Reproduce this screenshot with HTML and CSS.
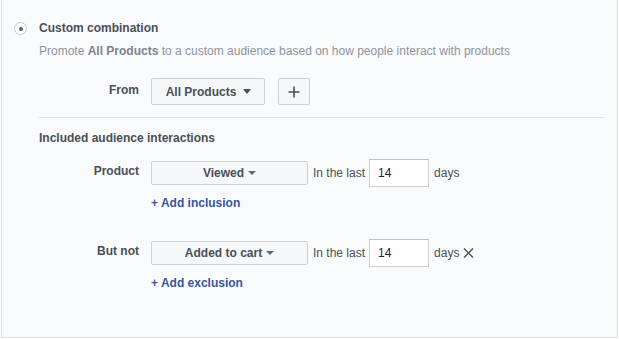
FILE: index.html
```html
<!DOCTYPE html>
<html lang="en">
<head>
  <meta charset="UTF-8">
  <title>Custom combination</title>
  <link rel="stylesheet" href="styles.css">
</head>
<body>
  <div class="panel">
    <div class="option">
      <span class="radio"><span class="radio-dot"></span></span>
      <div class="option-body">
        <div class="option-title">Custom combination</div>
        <p class="option-desc">Promote <b>All Products</b> to a custom audience based on how people interact with products</p>

        <div class="field-row from-row">
          <span class="field-label">From</span>
          <button class="btn btn-set">All Products <span class="caret"></span></button>
          <button class="btn btn-add">
            <svg width="12" height="12" viewBox="0 0 12 12"><path d="M6 0.5v11M0.5 6h11" stroke="#4b4f56" stroke-width="1.6" fill="none"/></svg>
          </button>
        </div>

        <hr class="divider">

        <div class="section-title">Included audience interactions</div>

        <div class="rule">
          <div class="field-row">
            <span class="field-label">Product</span>
            <button class="btn btn-select">Viewed <span class="caret small"></span></button>
            <span class="field-text">In the last</span>
            <input class="days-input" type="text" value="14">
            <span class="field-text">days</span>
          </div>
          <a class="add-link" href="#">+ Add inclusion</a>
        </div>

        <div class="rule exclude">
          <div class="field-row">
            <span class="field-label">But not</span>
            <button class="btn btn-select">Added to cart <span class="caret small"></span></button>
            <span class="field-text">In the last</span>
            <input class="days-input" type="text" value="14">
            <span class="field-text">days</span>
            <svg class="remove" width="11" height="10" viewBox="0 0 11 10"><path d="M1 0.5l9 9M10 0.5l-9 9" stroke="#4b4f56" stroke-width="1.4" fill="none"/></svg>
          </div>
          <a class="add-link" href="#">+ Add exclusion</a>
        </div>
      </div>
    </div>
  </div>
</body>
</html>
```

FILE: styles.css
```css
body {
  margin: 0;
  font-family: "Liberation Sans", Helvetica, Arial, sans-serif;
  font-size: 12px;
  line-height: 16px;
  color: #4b4f56;
  background: #fff;
}
.panel {
  margin-left: 1px;
  width: 615px;
  height: 337px;
  background: #f9fafb;
  border: 1px solid #dddfe2;
  border-top: none;
}
.option {
  display: flex;
  gap: 12px;
  padding: 20px 13px 0 12px;
}
.radio {
  width: 11px;
  height: 11px;
  border: 1px solid #c4c8ce;
  border-radius: 50%;
  background: #fff;
  margin-top: 2px;
  display: flex;
  align-items: center;
  justify-content: center;
  flex-shrink: 0;
}
.radio-dot {
  width: 4px;
  height: 4px;
  border-radius: 50%;
  background: #5d6168;
}
.option-body {
  flex: 1;
}
.option-title {
  font-weight: bold;
}
.option-desc {
  margin: 7px 0 0;
  color: #90949c;
}
.option-desc b {
  color: #7f838a;
}
.field-row {
  display: flex;
  align-items: center;
}
.from-row {
  margin-top: 19px;
}
.field-label {
  width: 100px;
  margin-right: 12px;
  text-align: right;
  font-weight: bold;
  align-self: flex-start;
  padding-top: 4px;
}
.btn {
  font-family: inherit;
  font-size: 12px;
  font-weight: bold;
  color: #4b4f56;
  background: #f6f7f9;
  border: 1px solid #ced0d4;
  border-radius: 2px;
  display: flex;
  align-items: center;
  justify-content: center;
  padding: 0;
  cursor: pointer;
}
.btn-set {
  height: 27px;
  width: 114px;
  gap: 7px;
  padding-left: 1px;
}
.btn-add {
  height: 27px;
  width: 32px;
  margin-left: 13px;
}
.btn-select {
  height: 24px;
  width: 157px;
  gap: 4px;
}
.caret {
  width: 0;
  height: 0;
  border-left: 4.5px solid transparent;
  border-right: 4.5px solid transparent;
  border-top: 5px solid #4b4f56;
}
.caret.small {
  border-left-width: 4px;
  border-right-width: 4px;
  border-top-width: 4px;
  border-top-color: #606770;
}
.divider {
  border: none;
  border-top: 1px solid #dddfe2;
  margin: 12px 0 0;
  height: 0;
}
.section-title {
  margin-top: 12px;
  font-weight: bold;
}
.rule {
  margin-top: 13px;
}
.rule.exclude {
  margin-top: 28px;
}
.field-text {
  margin: 0 4px 0 5px;
}
.days-input {
  width: 60px;
  height: 28px;
  box-sizing: border-box;
  border: 1px solid #ccd0d5;
  border-top-color: #bec3c9;
  background: #fff;
  padding: 0 8px;
  font-family: inherit;
  font-size: 12px;
  color: #1d2129;
}
.add-link {
  display: block;
  margin: 8px 0 0 112px;
  color: #365899;
  font-weight: bold;
  text-decoration: none;
}
```
